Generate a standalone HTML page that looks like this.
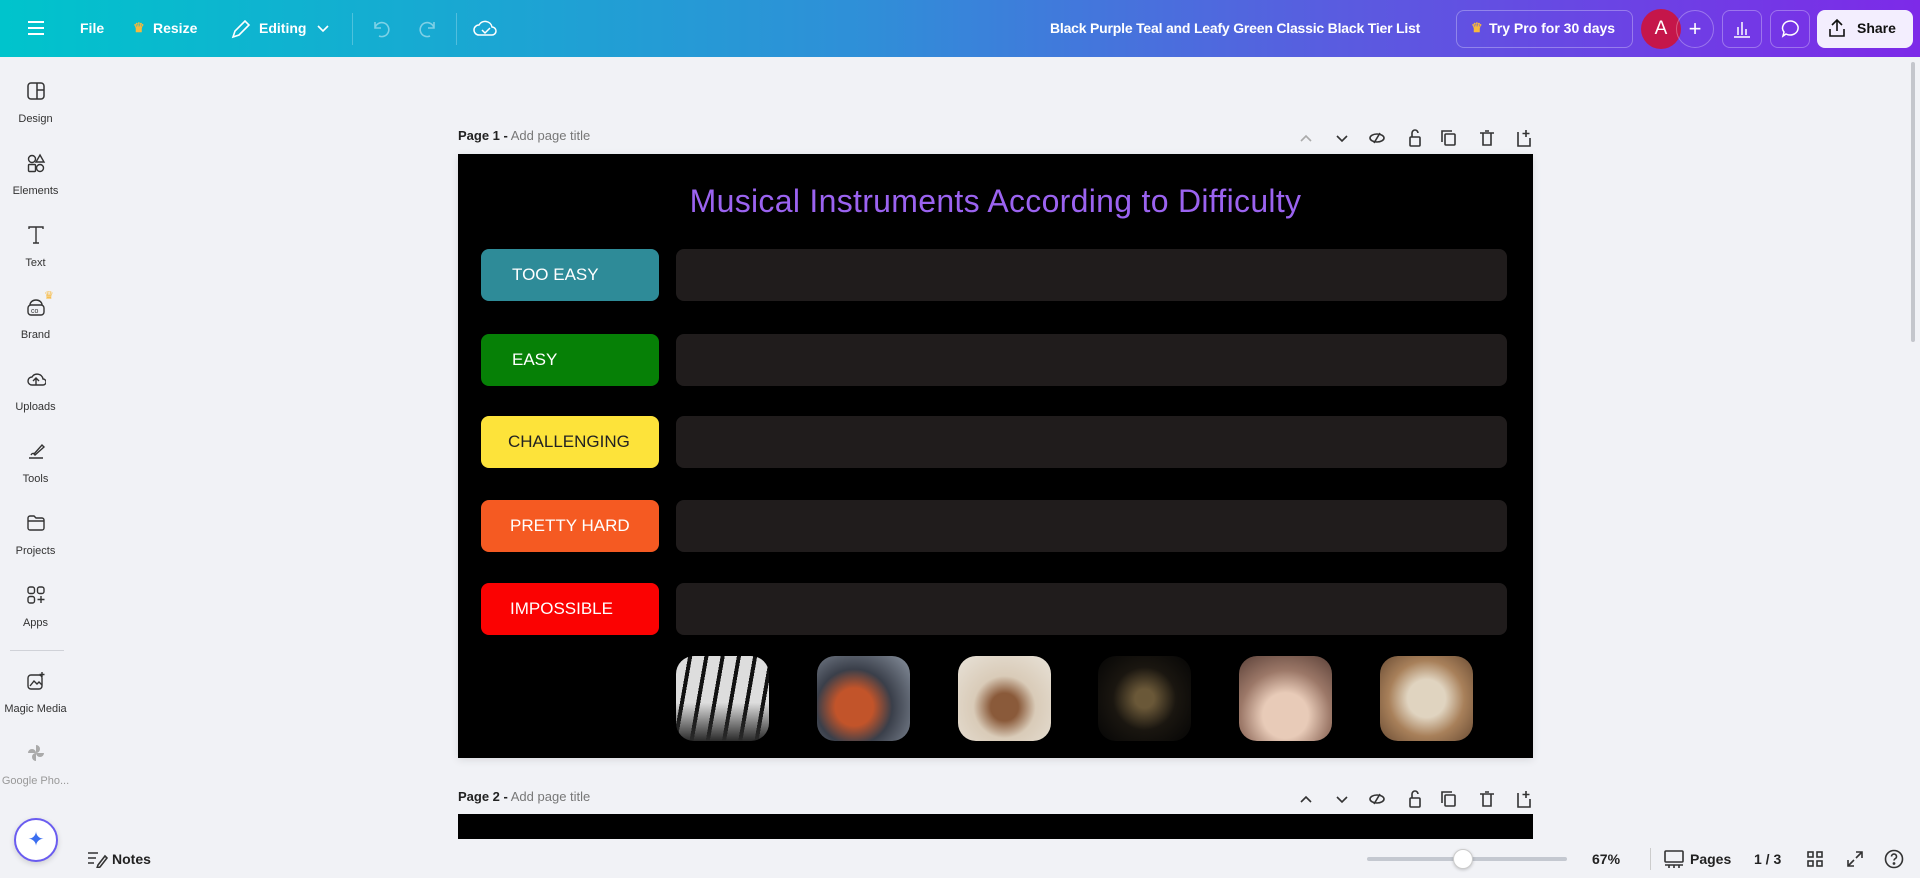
<!DOCTYPE html>
<html><head><meta charset="utf-8"><style>
*{box-sizing:border-box;margin:0;padding:0}
body{width:1920px;height:878px;overflow:hidden;background:#f1f2f6;font-family:"Liberation Sans",sans-serif;position:relative}
.top{position:absolute;left:0;top:0;width:1920px;height:57px;background:linear-gradient(90deg,#00c4cc 0%,#2f8fd8 45%,#5a5be0 70%,#7d2ae8 100%);color:#fff}
.top .t{position:absolute;top:20px;font-size:14px;font-weight:bold;color:#fff}
.btn{position:absolute;top:10px;height:38px;border:1px solid rgba(255,255,255,.3);border-radius:8px}
.side{position:absolute;left:0;top:57px;width:71px;height:821px;background:#f1f2f6}
.si{position:absolute;left:0;width:71px;text-align:center;font-size:11px;color:#333}
.si svg{position:absolute;left:26px}
.canvas{position:absolute;left:458px;top:154px;width:1075px;height:604px;background:#000;box-shadow:0 2px 8px rgba(0,0,0,.1)}
.title{position:absolute;left:0;width:100%;top:29px;text-align:center;color:#9b63f0;font-size:32px;font-family:"Liberation Sans",sans-serif;letter-spacing:0.3px}
.lab{position:absolute;left:23px;width:178px;height:52px;border-radius:8px;color:#fff;font-size:17px;line-height:52px;padding-left:31px;font-family:"Liberation Sans",sans-serif}
.bar{position:absolute;left:218px;width:831px;height:52px;border-radius:8px;background:#201c1c}
.img{position:absolute;top:502px;width:93px;height:85px;border-radius:18px}
.ph{position:absolute;font-size:13px;color:#222}
.ph b{font-weight:bold}.ph span{color:#777}
.ic{position:absolute;stroke:#333;fill:none;stroke-width:1.6}
</style></head><body>
<div class="top">
<svg style="position:absolute;left:27px;top:20px" width="18" height="16"><path d="M1 2h16M1 8h16M1 14h16" stroke="#fff" stroke-width="2"/></svg>
<div class="t" style="left:80px">File</div>
<div class="t" style="left:133px;color:#f7b93e;font-size:13px">♛</div>
<div class="t" style="left:153px">Resize</div>
<svg style="position:absolute;left:230px;top:18px" width="22" height="22"><path d="M3 19l2-6L15 3l4 4L9 17z" stroke="#fff" stroke-width="1.6" fill="none"/></svg>
<div class="t" style="left:259px">Editing</div>
<svg style="position:absolute;left:316px;top:24px" width="14" height="10"><path d="M2 2l5 5 5-5" stroke="#fff" stroke-width="1.6" fill="none"/></svg>
<div style="position:absolute;left:352px;top:13px;width:1px;height:32px;background:rgba(255,255,255,.25)"></div>
<svg style="position:absolute;left:370px;top:18px" width="24" height="22"><path d="M5 4v6h6M5 10a7 7 0 1 1 4 8" stroke="rgba(255,255,255,.45)" stroke-width="1.6" fill="none"/></svg>
<svg style="position:absolute;left:415px;top:18px" width="24" height="22"><path d="M19 4v6h-6M19 10a7 7 0 1 0-4 8" stroke="rgba(255,255,255,.45)" stroke-width="1.6" fill="none"/></svg>
<div style="position:absolute;left:456px;top:13px;width:1px;height:32px;background:rgba(255,255,255,.25)"></div>
<svg style="position:absolute;left:472px;top:16px" width="26" height="24"><path d="M7 19a5 5 0 0 1 0-10 7 7 0 0 1 13 2 4 4 0 0 1 0 8z M10 14l3 3 5-5" stroke="#fff" stroke-width="1.5" fill="none"/></svg>
<div class="t" style="left:1050px;font-size:14px;letter-spacing:-0.2px">Black Purple Teal and Leafy Green Classic Black Tier List</div>
<div class="btn" style="left:1456px;width:177px"></div>
<div class="t" style="left:1471px;color:#f7b93e;font-size:13px">♛</div>
<div class="t" style="left:1489px">Try Pro for 30 days</div>
<div style="position:absolute;left:1641px;top:9px;width:40px;height:40px;border-radius:50%;background:#c5164a;color:#fff;font-size:19px;text-align:center;line-height:40px">A</div>
<div style="position:absolute;left:1676px;top:10px;width:38px;height:38px;border-radius:50%;border:1px solid rgba(255,255,255,.3);color:#fff;font-size:22px;text-align:center;line-height:35px">+</div>
<div class="btn" style="left:1722px;width:40px"></div>
<svg style="position:absolute;left:1732px;top:19px" width="20" height="20"><path d="M2 18h16M6 16V8M10 16V3M14 16V10" stroke="#fff" stroke-width="1.5"/></svg>
<div class="btn" style="left:1770px;width:40px"></div>
<svg style="position:absolute;left:1779px;top:18px" width="22" height="22"><path d="M11 3a8 7 0 1 1-4 13l-3 2 1-4a8 7 0 0 1 6-11z" stroke="#fff" stroke-width="1.5" fill="none"/></svg>
<div style="position:absolute;left:1817px;top:10px;width:96px;height:38px;border-radius:8px;background:#f3eefe"></div>
<svg style="position:absolute;left:1826px;top:17px" width="22" height="22"><path d="M11 14V3M6 8l5-5 5 5M4 12v7h14v-7" stroke="#111" stroke-width="1.6" fill="none"/></svg>
<div class="t" style="left:1857px;color:#111">Share</div>
</div>

<div class="side">
<div style="position:absolute;left:10px;top:593px;width:54px;height:1px;background:#d0d2d8"></div>
</div>
<div class="si" style="top:81px"><svg width="20" height="20"><rect x="2" y="2" width="16" height="16" rx="3" stroke="#333" fill="none" stroke-width="1.5"/><path d="M11 2v16M11 9h7" stroke="#333" stroke-width="1.5"/></svg><div style="padding-top:32px">Design</div></div>
<div class="si" style="top:153px"><svg width="20" height="20"><circle cx="6" cy="6" r="3.5" stroke="#333" fill="none" stroke-width="1.4"/><path d="M14 2l4 7h-8z" stroke="#333" fill="none" stroke-width="1.4"/><rect x="2.5" y="11.5" width="7" height="7" rx="1" stroke="#333" fill="none" stroke-width="1.4"/><circle cx="14" cy="15" r="3.5" stroke="#333" fill="none" stroke-width="1.4"/></svg><div style="padding-top:32px">Elements</div></div>
<div class="si" style="top:225px"><svg width="20" height="20"><path d="M3 4V2h14v2M10 2v16M7 18h6" stroke="#333" fill="none" stroke-width="1.4"/></svg><div style="padding-top:32px">Text</div></div>
<div class="si" style="top:297px"><svg width="20" height="20"><rect x="2" y="8" width="16" height="10" rx="3" stroke="#333" fill="none" stroke-width="1.4"/><path d="M4 8a6 5 0 0 1 12 0" stroke="#333" fill="none" stroke-width="1.4"/><text x="5" y="16" font-size="7" fill="#333">co</text></svg><span style="position:absolute;left:44px;top:-8px;color:#f7b93e;font-size:11px">♛</span><div style="padding-top:32px">Brand</div></div>
<div class="si" style="top:369px"><svg width="20" height="20"><path d="M6 16a4 4 0 0 1 0-8 6 6 0 0 1 11 2 3 3 0 0 1 0 6zM10 16v-6M7 12l3-3 3 3" stroke="#333" fill="none" stroke-width="1.4"/></svg><div style="padding-top:32px">Uploads</div></div>
<div class="si" style="top:441px"><svg width="20" height="20"><path d="M3 17h14M8 13l8-9 2 2-9 8zM5 14c1-2 3-2 3-1" stroke="#333" fill="none" stroke-width="1.4"/></svg><div style="padding-top:32px">Tools</div></div>
<div class="si" style="top:513px"><svg width="20" height="20"><path d="M2 5a2 2 0 0 1 2-2h4l2 2h6a2 2 0 0 1 2 2v8a2 2 0 0 1-2 2H4a2 2 0 0 1-2-2z M2 8h16" stroke="#333" fill="none" stroke-width="1.4"/></svg><div style="padding-top:32px">Projects</div></div>
<div class="si" style="top:585px"><svg width="20" height="20"><rect x="2" y="2" width="6.5" height="6.5" rx="2" stroke="#333" fill="none" stroke-width="1.4"/><rect x="11.5" y="2" width="6.5" height="6.5" rx="2" stroke="#333" fill="none" stroke-width="1.4"/><rect x="2" y="11.5" width="6.5" height="6.5" rx="2" stroke="#333" fill="none" stroke-width="1.4"/><path d="M15 11v7M11.5 14.5h7" stroke="#333" stroke-width="1.4"/></svg><div style="padding-top:32px">Apps</div></div>
<div class="si" style="top:671px"><svg width="20" height="20"><rect x="2" y="4" width="14" height="14" rx="3" stroke="#333" fill="none" stroke-width="1.4"/><path d="M4 15l4-5 3 3 2-2 3 3M16 1v5M13.5 3.5h5" stroke="#333" fill="none" stroke-width="1.4"/></svg><div style="padding-top:32px">Magic Media</div></div>
<div class="si" style="top:743px;color:#999"><svg width="20" height="20"><path d="M10 10L10 2a4 4 0 0 1 0 8zM10 10h8a4 4 0 0 1-8 0zM10 10v8a4 4 0 0 1 0-8zM10 10H2a4 4 0 0 1 8 0z" fill="#aaa"/></svg><div style="padding-top:32px">Google Pho...</div></div>

<div class="ph" style="left:458px;top:128px"><b>Page 1 -</b> <span>Add page title</span></div>
<svg class="ic" style="left:1296px;top:128px" width="240" height="20"><path d="M5 13l5-5 5 5" stroke="#aaa"/><path d="M41 8l5 5 5-5"/><ellipse cx="81" cy="10" rx="7" ry="4"/><path d="M78 15l6-10"/><rect x="114" y="9" width="10" height="9" rx="1"/><path d="M116 9V5a3 3 0 0 1 6 0"/><rect x="149" y="6" width="10" height="11" rx="1"/><path d="M146 14V3h10"/><path d="M184 5h14M187 5v12h8V5M189 3h4"/><path d="M222 4v14h12V10M230 2v7M226.5 5.5h7"/></svg>

<div class="canvas">
<div class="title">Musical Instruments According to Difficulty</div>
<div class="lab" style="top:95px;background:#2e8b98">TOO EASY</div>
<div class="lab" style="top:180px;background:#068006">EASY</div>
<div class="lab" style="top:262px;background:#fde33a;color:#222;padding-left:27px">CHALLENGING</div>
<div class="lab" style="top:346px;background:#f55a22;padding-left:29px">PRETTY HARD</div>
<div class="lab" style="top:429px;background:#fb0202;padding-left:29px">IMPOSSIBLE</div>
<div class="bar" style="top:95px"></div>
<div class="bar" style="top:180px"></div>
<div class="bar" style="top:262px"></div>
<div class="bar" style="top:346px"></div>
<div class="bar" style="top:429px"></div>
<div class="img" style="left:218px;background:linear-gradient(180deg,transparent 55%,#2a2a2a 100%),repeating-linear-gradient(100deg,#ddd 0 12px,#111 12px 16px),#444"></div>
<div class="img" style="left:359px;background:radial-gradient(circle at 40% 60%,#c2542a 0 25%,#3a3f4a 50%,#8a93a0 100%)"></div>
<div class="img" style="left:500px;background:radial-gradient(circle at 50% 60%,#8a5a3a 0 20%,#d9cbb8 45%,#e8e2d8 100%)"></div>
<div class="img" style="left:640px;background:radial-gradient(circle at 50% 50%,#6a5838 0 15%,#1a1610 50%,#050505 100%)"></div>
<div class="img" style="left:781px;background:radial-gradient(circle at 50% 70%,#e8cbb8 0 30%,#9c7868 60%,#5a4038 100%)"></div>
<div class="img" style="left:922px;background:radial-gradient(circle at 50% 50%,#e0d4c0 0 30%,#a8805a 60%,#6a4c34 100%)"></div>
</div>

<div class="ph" style="left:458px;top:789px"><b>Page 2 -</b> <span>Add page title</span></div>
<svg class="ic" style="left:1296px;top:789px" width="240" height="20"><path d="M5 13l5-5 5 5"/><path d="M41 8l5 5 5-5"/><ellipse cx="81" cy="10" rx="7" ry="4"/><path d="M78 15l6-10"/><rect x="114" y="9" width="10" height="9" rx="1"/><path d="M116 9V5a3 3 0 0 1 6 0"/><rect x="149" y="6" width="10" height="11" rx="1"/><path d="M146 14V3h10"/><path d="M184 5h14M187 5v12h8V5M189 3h4"/><path d="M222 4v14h12V10M230 2v7M226.5 5.5h7"/></svg>
<div style="position:absolute;left:458px;top:814px;width:1075px;height:25px;background:#000"></div>

<div style="position:absolute;left:0;top:839px;width:1920px;height:39px;background:#f1f2f6"></div>
<div style="position:absolute;left:14px;top:818px;width:44px;height:44px;border-radius:50%;background:#fff;border:2px solid #6a5cf0;box-shadow:0 2px 6px rgba(0,0,0,.15);color:#3b6ef0;text-align:center;line-height:40px;font-size:20px">✦</div>
<svg class="ic" style="left:86px;top:850px" width="22" height="18"><path d="M2 3h10M2 8h8M2 13h6M12 15l7-9 2 2-7 9-3 1z"/></svg>
<div style="position:absolute;left:112px;top:851px;font-size:14px;font-weight:bold;color:#222">Notes</div>
<div style="position:absolute;left:1367px;top:857px;width:200px;height:4px;border-radius:2px;background:#c4c8d0"></div>
<div style="position:absolute;left:1453px;top:849px;width:20px;height:20px;border-radius:50%;background:#fff;border:1px solid #ccc;box-shadow:0 1px 3px rgba(0,0,0,.2)"></div>
<div style="position:absolute;left:1592px;top:851px;font-size:14px;font-weight:bold;color:#222">67%</div>
<div style="position:absolute;left:1650px;top:848px;width:1px;height:22px;background:#ccc"></div>
<svg class="ic" style="left:1663px;top:849px" width="22" height="20"><rect x="2" y="2" width="18" height="11" rx="1"/><path d="M2 16h18M6 16v3M11 16v3M16 16v3"/></svg>
<div style="position:absolute;left:1690px;top:851px;font-size:14px;font-weight:bold;color:#222">Pages</div>
<div style="position:absolute;left:1754px;top:851px;font-size:14px;font-weight:bold;color:#222">1 / 3</div>
<svg class="ic" style="left:1806px;top:850px" width="18" height="18"><rect x="2" y="2" width="5" height="5"/><rect x="11" y="2" width="5" height="5"/><rect x="2" y="11" width="5" height="5"/><rect x="11" y="11" width="5" height="5"/></svg>
<svg class="ic" style="left:1846px;top:850px" width="18" height="18"><path d="M10 2h6v6M16 2l-6 6M8 16H2v-6M2 16l6-6"/></svg>
<svg class="ic" style="left:1884px;top:849px" width="20" height="20"><circle cx="10" cy="10" r="8.5"/><path d="M7.5 7.5a2.5 2.5 0 1 1 3.5 2.3c-.7.4-1 .9-1 1.7"/><circle cx="10" cy="14.5" r=".6" fill="#333"/></svg>
<div style="position:absolute;left:1911px;top:62px;width:4px;height:280px;border-radius:2px;background:#c4c6cc"></div>
</body></html>
